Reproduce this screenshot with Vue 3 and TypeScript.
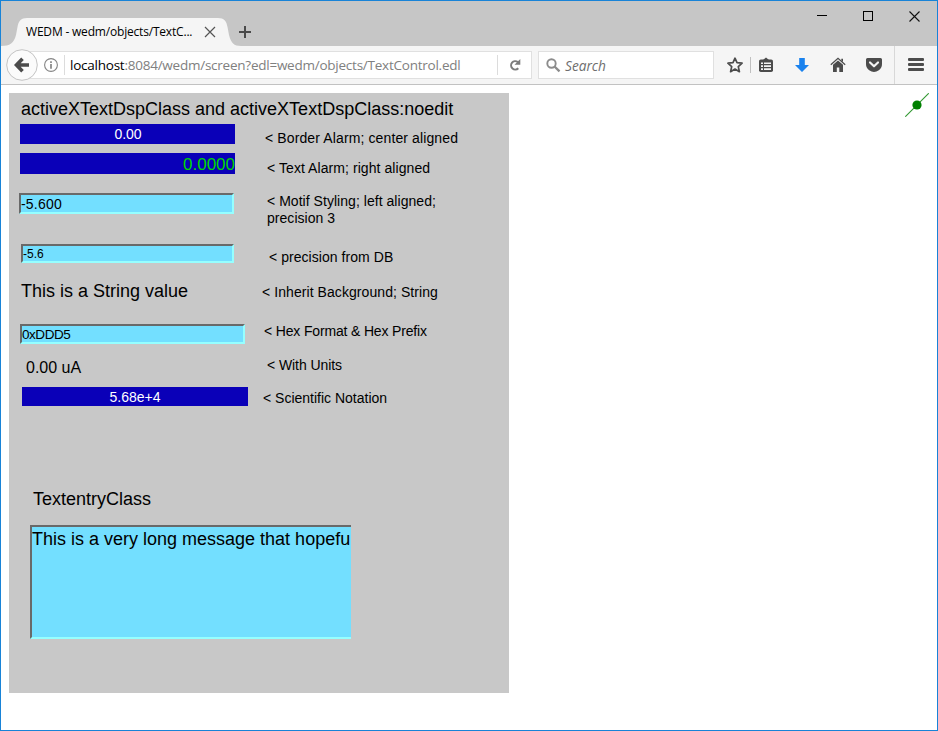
<script setup lang="ts">
interface Item {
  id: string
  kind: string
  text: string
}

const controls: Item[] = [
  { id: 'c-center', kind: 'alarm', text: '0.00' },
  { id: 'c-right', kind: 'alarm', text: '0.0000' },
  { id: 'c-precision', kind: 'motif', text: '-5.600' },
  { id: 'c-db', kind: 'motif', text: '-5.6' },
  { id: 'c-string', kind: 'plain', text: 'This is a String value' },
  { id: 'c-hex', kind: 'motif', text: '0xDDD5' },
  { id: 'c-units', kind: 'plain', text: '0.00 uA' },
  { id: 'c-sci', kind: 'alarm', text: '5.68e+4' },
]

const notes: Item[] = [
  { id: 'n-center', kind: 'note', text: '< Border Alarm; center aligned' },
  { id: 'n-right', kind: 'note', text: '< Text Alarm; right aligned' },
  { id: 'n-precision', kind: 'note', text: '< Motif Styling; left aligned;\nprecision 3' },
  { id: 'n-db', kind: 'note', text: '< precision from DB' },
  { id: 'n-string', kind: 'note', text: '< Inherit Background; String' },
  { id: 'n-hex', kind: 'note', text: '< Hex Format & Hex Prefix' },
  { id: 'n-units', kind: 'note', text: '< With Units' },
  { id: 'n-sci', kind: 'note', text: '< Scientific Notation' },
]
</script>

<template>
  <div class="window">
    <header class="titlebar">
      <div class="tab">
        <svg class="tab-shape" width="240" height="28" viewBox="0 0 240 28">
          <path d="M0 28C9 28 13 25 15 17L16.500 9C17.500 3 20 0 26 0H217C223 0 225.500 3 226.500 9L228 17C230 25 233 28 240 28Z" fill="#f5f5f5" />
        </svg>
        <span class="tab-title">WEDM - wedm/objects/TextC...</span>
        <svg class="tab-close" width="12" height="12" viewBox="0 0 12 12">
          <path d="M1 1L11 11M11 1L1 11" stroke="#555" stroke-width="1.200" />
        </svg>
      </div>
      <svg class="new-tab" width="12" height="12" viewBox="0 0 12 12">
        <path d="M6 0V12M0 6H12" stroke="#4a4a4a" stroke-width="2" />
      </svg>
      <div class="window-buttons">
        <svg width="10" height="10" viewBox="0 0 10 10"><path d="M0 4.500H10" stroke="#000" /></svg>
        <svg width="10" height="10" viewBox="0 0 10 10"><rect x=".5" y=".5" width="9" height="9" fill="none" stroke="#000" /></svg>
        <svg width="11" height="11" viewBox="0 0 11 11"><path d="M.5 .5L10.500 10.500M10.500 .5L.5 10.500" stroke="#111" stroke-width="1.100" /></svg>
      </div>
    </header>

    <div class="toolbar">
      <svg class="back" width="32" height="32" viewBox="0 0 32 32">
        <circle cx="16" cy="16" r="15.300" fill="#fbfbfb" stroke="#c3c3c3" />
        <path d="M16.500 9.800L10.500 16L16.500 22.200M11 16H23" fill="none" stroke="#4c4c4c" stroke-width="3.600" />
      </svg>
      <div class="url">
        <svg class="info" width="14" height="14" viewBox="0 0 14 14">
          <circle cx="7" cy="7" r="6.400" fill="none" stroke="#858585" stroke-width="1.100" />
          <path d="M7 6V10.700M7 3.200V5" stroke="#858585" stroke-width="1.700" />
        </svg>
        <div class="address"><span class="host">localhost</span>:8084/wedm/screen?edl=wedm/objects/TextControl.edl</div>
        <div class="reload">
          <svg width="12" height="12" viewBox="0 0 12 12">
            <path d="M8.800 3A4.200 4.200 0 1 0 9.300 9.300" fill="none" stroke="#7c7c7c" stroke-width="2" />
            <path d="M11.300 0V5.800H5.500Z" fill="#7c7c7c" />
          </svg>
        </div>
      </div>
      <div class="search">
        <svg width="15" height="15" viewBox="0 0 15 15">
          <circle cx="5.500" cy="5.500" r="4.200" fill="none" stroke="#8c8c8c" stroke-width="1.900" />
          <path d="M8.500 8.500L13.500 13.300" stroke="#8c8c8c" stroke-width="2.400" />
        </svg>
        <span>Search</span>
      </div>
      <div class="tools">
        <svg width="16" height="16" viewBox="0 0 16 16">
          <path d="M8 1.200L10 5.700L15.100 6.200L11.300 9.600L12.400 14.700L8 12.100L3.600 14.700L4.700 9.600L.9 6.200L6 5.700Z" fill="none" stroke="#4c4c4c" stroke-width="1.700" stroke-linejoin="round" />
        </svg>
        <i class="split"></i>
        <svg class="clip" width="16" height="16" viewBox="0 0 16 16">
          <path d="M5 3L8 .4L11 3Z" fill="#4c4c4c" />
          <rect x="1" y="2.400" width="14" height="12.600" rx="1.800" fill="#4c4c4c" />
          <path d="M3 5.400H5V7H3ZM6 5.400H13V7H6ZM3 8.200H5V9.900H3ZM6 8.200H13V9.900H6ZM3 11.200H5V13H3ZM6 11.200H13V13H6Z" fill="#f5f5f5" />
        </svg>
        <svg width="16" height="16" viewBox="0 0 16 16"><path d="M5.200 1H10.800V8H15L8 15L1 8H5.200Z" fill="#1a82ee" /></svg>
        <svg width="16" height="16" viewBox="0 0 16 16">
          <path d="M.8 7.700L8 1.300L15.200 7.700" fill="none" stroke="#4c4c4c" stroke-width="1.300" />
          <path d="M3 7.700L8 3.400L13 7.700V15H9.300V10.500H6.800V15H3ZM11.300 1.800H13V5L11.300 3.500Z" fill="#4c4c4c" />
        </svg>
        <svg width="16" height="16" viewBox="0 0 16 16">
          <path d="M1.500 1H14.500Q16 1 16 2.500V7Q16 11 12.800 13.200Q8 16.600 3.200 13.200Q0 11 0 7V2.500Q0 1 1.500 1Z" fill="#4c4c4c" />
          <path d="M4 5.500L8 9.300L12 5.500" fill="none" stroke="#f5f5f5" stroke-width="2.200" stroke-linecap="round" stroke-linejoin="round" />
        </svg>
      </div>
      <div class="menu"><i></i><i></i><i></i></div>
    </div>

    <main class="page">
      <section class="screen">
        <h1>activeXTextDspClass and activeXTextDspClass:noedit</h1>
        <div class="columns">
          <div class="controls">
            <div v-for="c in controls" :key="c.id" :class="[c.kind, c.id]">{{ c.text }}</div>
          </div>
          <div class="notes">
            <div v-for="n in notes" :key="n.id" :class="n.id">{{ n.text }}</div>
          </div>
        </div>
        <h2>TextentryClass</h2>
        <div class="entry">This is a very long message that hopefu</div>
      </section>
      <svg class="status" width="24" height="24" viewBox="0 0 24 24">
        <path d="M.3 23.700L23.700 .3" stroke="#2f972f" stroke-width="1.100" />
        <circle cx="12" cy="12" r="4.600" fill="#008000" />
      </svg>
    </main>
  </div>
</template>

<style>
body {
  margin: 0;
  background: #fff;
}
</style>

<style scoped>
.window {
  box-sizing: border-box;
  width: 938px;
  height: 731px;
  border: 1px solid #1883d7;
  background: #fff;
  font-family: "Liberation Sans", Arial, sans-serif;
  color: #000;
  overflow: hidden;
}

svg {
  display: block;
  flex: none;
}

.titlebar {
  display: flex;
  height: 45px;
  background: #c6c6c6;
}

.tab {
  display: grid;
  grid-template-columns: 25px 172px 1fr;
  width: 240px;
  height: 28px;
  margin-top: 17px;
  align-items: center;
}

.tab-shape {
  grid-area: 1 / 1 / 2 / 4;
}

.tab-title {
  grid-area: 1 / 2;
  font: 12px/28px "Open Sans", sans-serif;
  letter-spacing: -0.19px;
  white-space: nowrap;
}

.tab-close {
  grid-area: 1 / 3;
  margin-left: 6px;
}

.new-tab {
  margin: 25px 0 0 -2px;
}

.window-buttons {
  display: flex;
  gap: 36px;
  margin: 10px 17px 0 auto;
}

.toolbar {
  display: flex;
  align-items: center;
  height: 38px;
  background: #f5f5f5;
  border-bottom: 1px solid #c2c2c2;
}

.back {
  margin-left: 5px;
  z-index: 1;
}

.url,
.search {
  display: flex;
  align-items: center;
  box-sizing: border-box;
  height: 28px;
  border: 1px solid #e0e0e0;
  background: #fff;
}

.url {
  width: 505px;
  margin-left: -11px;
}

.info {
  margin-left: 16px;
}

.address {
  height: 20px;
  margin-left: 6px;
  padding-left: 5px;
  border-left: 1px solid #dcdcdc;
  font: 13.5px/21px "Open Sans", sans-serif;
  letter-spacing: -0.24px;
  color: #808080;
  white-space: nowrap;
}

.host {
  color: #000;
}

.reload {
  display: flex;
  align-items: center;
  justify-content: center;
  width: 33px;
  height: 20px;
  margin-left: auto;
  border-left: 1px solid #dcdcdc;
}

.search {
  width: 176px;
  margin-left: 6px;
  padding-left: 7px;
  gap: 4px;
  font: italic 13.7px/21px "Open Sans", sans-serif;
  color: #6e6e6e;
}

.tools {
  display: flex;
  align-items: center;
  gap: 20px;
  margin-left: 13px;
}

.split {
  width: 1px;
  height: 16px;
  margin-left: -13px;
  background: #c0c0c0;
}

.clip {
  margin-left: -13px;
}

.menu {
  display: flex;
  flex-direction: column;
  justify-content: center;
  gap: 2px;
  box-sizing: border-box;
  height: 38px;
  margin-left: 12px;
  padding: 0 0 1px 13px;
  border-left: 1px solid #d8d8d8;
}

.menu i {
  width: 16px;
  height: 3px;
  border-radius: 1px;
  background: #4c4c4c;
}

.page {
  display: flex;
  justify-content: space-between;
  padding: 8px 8px 0;
}

.screen {
  width: 500px;
  height: 600px;
  background: #c8c8c8;
}

h1,
h2 {
  margin: 0;
  font-size: 18px;
  font-weight: 400;
  white-space: nowrap;
}

h1 {
  height: 31px;
  padding-left: 12px;
  line-height: 33px;
}

h2 {
  height: 20px;
  margin: 83px 0 16px 24px;
  line-height: 20px;
}

.columns {
  display: grid;
  grid-template-columns: 253px 1fr;
  height: 282px;
}

.controls,
.notes {
  display: flex;
  flex-direction: column;
  align-items: flex-start;
}

.controls > div {
  box-sizing: border-box;
  white-space: nowrap;
}

.alarm {
  background: #0a00b8;
  color: #fff;
  text-align: center;
}

.motif,
.entry {
  border: 2px solid;
  border-color: #696969 #96ffff #96ffff #696969;
  background: #73dfff;
}

.c-center {
  width: 215px;
  height: 20px;
  margin-left: 11px;
  padding-left: 1px;
  font-size: 14px;
  line-height: 20px;
}

.c-right {
  width: 215px;
  height: 21px;
  margin: 9px 0 0 11px;
  color: #00d800;
  font-size: 17px;
  line-height: 24px;
  text-align: right;
}

.c-precision {
  width: 215px;
  height: 21px;
  margin: 19px 0 0 10px;
  font-size: 14px;
  line-height: 18px;
  letter-spacing: 0.2px;
}

.c-db {
  width: 213px;
  height: 19px;
  margin: 30px 0 0 12px;
  font-size: 12px;
  line-height: 16px;
}

.c-string {
  height: 20px;
  margin: 18px 0 0 12px;
  font-size: 18px;
  line-height: 20px;
}

.c-hex {
  width: 225px;
  height: 20px;
  margin: 23px 0 0 11px;
  font-size: 13.5px;
  line-height: 17px;
  letter-spacing: -0.45px;
}

.c-units {
  height: 18px;
  margin: 14px 0 0 17px;
  font-size: 16px;
  line-height: 20px;
}

.c-sci {
  width: 226px;
  height: 19px;
  margin: 11px 0 0 13px;
  font-size: 14px;
  line-height: 20px;
}

.notes {
  font-size: 14px;
  line-height: 17px;
  white-space: pre;
}

.n-center {
  margin: 6px 0 0 3px;
  letter-spacing: 0.12px;
}

.n-right {
  margin: 13px 0 0 5px;
  letter-spacing: 0.07px;
}

.n-precision {
  margin: 16px 0 0 5px;
  letter-spacing: 0.04px;
}

.n-db {
  margin: 22px 0 0 7px;
  letter-spacing: 0.05px;
}

.n-string {
  margin-top: 18px;
  letter-spacing: 0.07px;
}

.n-hex {
  margin: 22px 0 0 2px;
  letter-spacing: -0.16px;
}

.n-units {
  margin: 17px 0 0 5px;
  letter-spacing: -0.08px;
}

.n-sci {
  margin: 16px 0 0 1px;
}

.entry {
  box-sizing: border-box;
  width: 321px;
  height: 114px;
  margin-left: 21px;
  border-right: 0;
  font-size: 18px;
  line-height: 24px;
  white-space: nowrap;
  overflow: hidden;
}
</style>
